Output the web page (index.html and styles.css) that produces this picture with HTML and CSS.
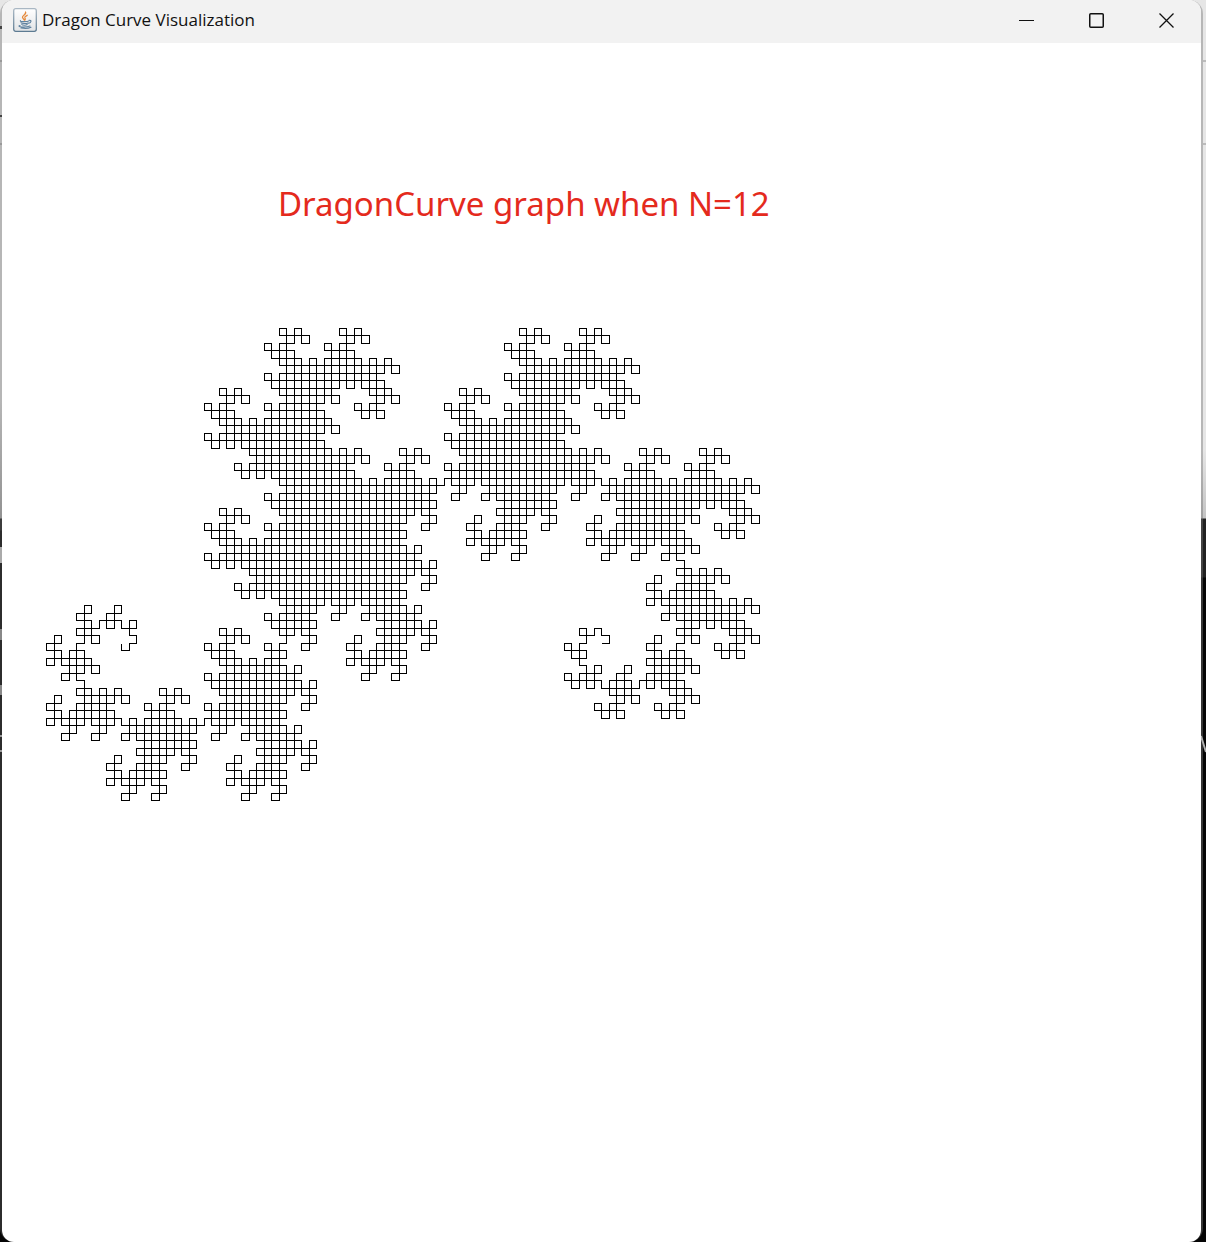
FILE: index.html
```html
<!DOCTYPE html>
<html lang="en">
<head>
<meta charset="utf-8">
<title>Dragon Curve Visualization</title>
<link rel="stylesheet" href="styles.css">
</head>
<body>
<div class="desktop">
  <div class="frame">
  <div class="window">
    <header class="titlebar">
      <svg class="java-icon" viewBox="0 0 24 24" aria-hidden="true">
        <defs>
          <linearGradient id="tile" x1="0" y1="0" x2="0" y2="1"><stop offset="0" stop-color="#fff"/><stop offset="1" stop-color="#e2e4e6"/></linearGradient>
          <linearGradient id="edge" x1="0" y1="0" x2="0" y2="1"><stop offset="0" stop-color="#a9b7c3"/><stop offset="1" stop-color="#5d7b92"/></linearGradient>
        </defs>
        <rect x=".7" y=".7" width="22.6" height="22.6" rx="2" fill="url(#tile)" stroke="url(#edge)" stroke-width="1.3"/>
        <path d="M12.5 4c1.4 2.2-3.6 3.3-3 5.4.2 1 1.6 1.8 1.9 2.8M14.2 7.3c-1.6.8-2.7 1.4-2.4 2.4.3.9 1 1.3.1 2.3" fill="none" stroke="#e58a3c" stroke-width="1.3" stroke-linecap="round"/>
        <path d="M7.500 12.700c-1.500 1.300 7.300 1.200 8.500.2M8 14.700c.6 1 5.500 1 7 .2M8.800 16.500c.8.9 4 .9 5.400.1M16 12.300c3-.4 2.300 2.300-.3 3M7 17.500c-4 1.200 5 2.600 10 .5M8 20c3.500.7 7.500.5 10-.7" fill="none" stroke="#5f829f" stroke-width="1.1" stroke-linecap="round"/>
      </svg>
      <h1 class="title">Dragon Curve Visualization</h1>
      <div class="controls">
        <button class="control" type="button" aria-label="Minimize"><svg viewBox="0 0 15 15"><path d="M0 7.5h15" shape-rendering="crispEdges"/></svg></button>
        <button class="control" type="button" aria-label="Maximize"><svg viewBox="0 0 15 15"><rect x=".75" y=".75" width="13.5" height="13.5" rx="1" stroke-width="1.5"/></svg></button>
        <button class="control" type="button" aria-label="Close"><svg viewBox="0 0 15 15"><path d="M.5.5l14 14M14.5.5l-14 14" stroke-width="1.3"/></svg></button>
      </div>
    </header>
    <main class="canvas">
      <h2 class="caption">DragonCurve graph when N=12</h2>
      <svg class="curve" viewBox="0 0 716 474" role="img" aria-label="Dragon curve of order 12"><path id="dragon"/></svg>
    </main>
  </div>
  </div>
  <svg class="behind-mark" viewBox="0 0 5 18" aria-hidden="true"><path d="M0 1l5 16"/></svg>
</div>
<script src="dragon.js"></script>
</body>
</html>
```
FILE: styles.css
```css
body {
  margin: 0;
  font-family: "Open Sans", "Noto Sans", sans-serif;
}

.desktop {
  position: relative;
  display: flex;
  min-height: 100vh;
  padding-right: 3px;
  box-sizing: border-box;
  background:
    linear-gradient(transparent 60px, #bbb 60px 62px, transparent 62px 143px, #bbb 143px 145px, transparent 145px),
    linear-gradient(#e6e6e6 0 450px, #c4c4c4 518px, #222 519px 577px, #050505 578px);
}

/* Window border, tinted by whatever lies behind each side */
.frame {
  display: flex;
  flex: 1;
  padding: 0 2px;
  border-radius: 14px;
  background:
    linear-gradient(transparent 26px, #444 26px 29px, transparent 29px 60px, #999 60px 62px, transparent 62px 115px, #444 115px 117px, transparent 117px 143px, #999 143px 145px, transparent 145px 547px, #aaa 547px 563px, transparent 563px 629px, #888 629px 640px, transparent 640px 685px, #888 685px 695px, transparent 695px 735px, #999 735px 737px, transparent 737px 750px, #999 750px 752px, transparent 752px) 0 0 / 2px 100% no-repeat,
    linear-gradient(#b6b6b6 0 400px, #929292 518px, #3c3c3c 519px 530px, #2c2c2c 531px) 0 0 / 50% 100% no-repeat,
    linear-gradient(#b6b6b6 0 450px, #a0a0a0 518px, #444 519px 577px, #353535 578px);
}

.behind-mark {
  position: absolute;
  top: 735px;
  right: 0;
  width: 5px;
  height: 18px;
  fill: none;
  stroke: #b0b0b0;
  stroke-width: 2;
}

.window {
  flex: 1;
  display: flex;
  flex-direction: column;
  overflow: hidden;
  border-radius: 12px;
  background: #fff;
}

.titlebar {
  display: flex;
  align-items: flex-start;
  height: 43px;
  padding-left: 11px;
  box-sizing: border-box;
  background: #f2f2f2;
}

.java-icon {
  width: 24px;
  height: 24px;
  margin-top: 8px;
}

.title {
  flex: 1;
  margin: 8px 0 0 5px;
  font-size: 17px;
  font-weight: 400;
  line-height: 24px;
  color: #111;
}

.controls {
  display: flex;
}

.control {
  display: grid;
  place-items: center;
  width: 70px;
  height: 41px;
  padding: 0;
  border: 0;
  background: none;
}

.control svg {
  width: 15px;
  height: 15px;
  fill: none;
  stroke: #111;
}

.canvas {
  flex: 1;
  padding: 137px 44px 0;
}

.caption {
  margin: 0 0 100px 232px;
  font-family: "Noto Sans", "Open Sans", sans-serif;
  font-size: 33px;
  font-weight: 400;
  line-height: 48px;
  color: #e42a1d;
}

.curve {
  display: block;
  width: 716px;
  height: 474px;
  fill: none;
  stroke: #000;
  shape-rendering: crispEdges;
}
```
FILE: dragon.js
```js
const ORDER = 12;
const STEP = 7.5;
const START = { x: 555.5, y: 315 };

// Left turn when the odd part of n is 1 modulo 4, otherwise right.
function turnsLeft(n) {
  while (n % 2 === 0) n /= 2;
  return n % 4 === 1;
}

const pixel = (v) => Math.floor(v) + 0.5;

let { x, y } = START;
let dx = 1;
let dy = 0;
let d = `M${pixel(x)} ${pixel(y)}`;
for (let n = 1; n <= 2 ** ORDER; n++) {
  x += dx * STEP;
  y += dy * STEP;
  d += `L${pixel(x)} ${pixel(y)}`;
  [dx, dy] = turnsLeft(n) ? [dy, -dx] : [-dy, dx];
}
document.getElementById("dragon").setAttribute("d", d);
```
